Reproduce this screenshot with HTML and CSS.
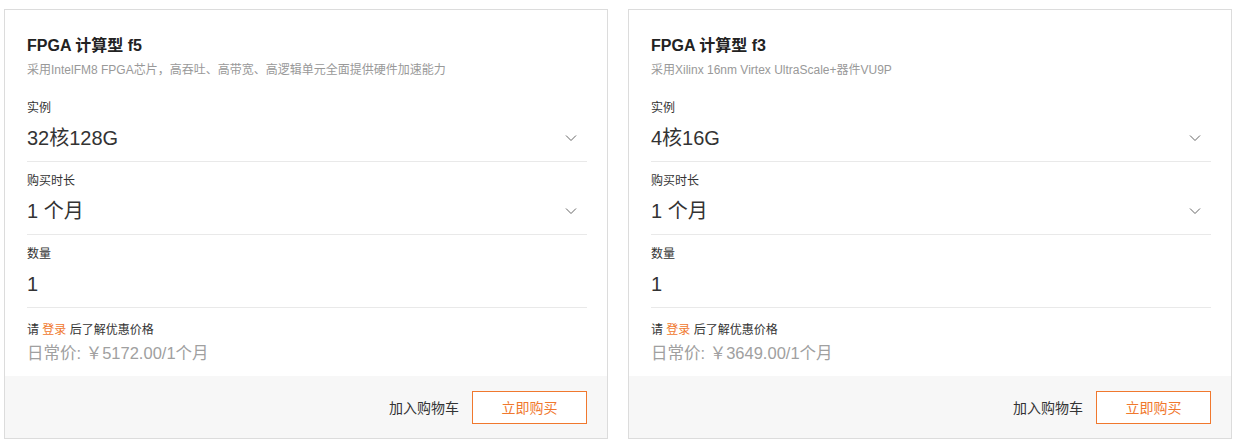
FILE: index.html
```html
<!DOCTYPE html>
<html lang="zh-CN">
<head>
<meta charset="utf-8">
<title>FPGA</title>
<link rel="stylesheet" href="styles.css">
</head>
<body>
<div class="page">
  <div class="card">
    <div class="body">
      <div class="head">
        <div class="title">FPGA 计算型 f5</div>
        <div class="desc">采用IntelFM8 FPGA芯片，高吞吐、高带宽、高逻辑单元全面提供硬件加速能力</div>
      </div>
      <div class="field">
        <div class="label">实例</div>
        <div class="value"><span>32核128G</span><svg class="chev" width="12" height="8" viewBox="0 0 12 8"><path d="M1 1.5 L6 6.5 L11 1.5" fill="none" stroke="#666" stroke-width="1"/></svg></div>
      </div>
      <div class="field">
        <div class="label">购买时长</div>
        <div class="value"><span>1 个月</span><svg class="chev" width="12" height="8" viewBox="0 0 12 8"><path d="M1 1.5 L6 6.5 L11 1.5" fill="none" stroke="#666" stroke-width="1"/></svg></div>
      </div>
      <div class="field">
        <div class="label">数量</div>
        <div class="value"><span>1</span></div>
      </div>
      <div class="login">请 <a class="link">登录</a> 后了解优惠价格</div>
      <div class="price">日常价: ￥5172.00/1个月</div>
    </div>
    <div class="foot">
      <span class="cart">加入购物车</span>
      <span class="buy">立即购买</span>
    </div>
  </div>
  <div class="card">
    <div class="body">
      <div class="head">
        <div class="title">FPGA 计算型 f3</div>
        <div class="desc">采用Xilinx 16nm Virtex UltraScale+器件VU9P</div>
      </div>
      <div class="field">
        <div class="label">实例</div>
        <div class="value"><span>4核16G</span><svg class="chev" width="12" height="8" viewBox="0 0 12 8"><path d="M1 1.5 L6 6.5 L11 1.5" fill="none" stroke="#666" stroke-width="1"/></svg></div>
      </div>
      <div class="field">
        <div class="label">购买时长</div>
        <div class="value"><span>1 个月</span><svg class="chev" width="12" height="8" viewBox="0 0 12 8"><path d="M1 1.5 L6 6.5 L11 1.5" fill="none" stroke="#666" stroke-width="1"/></svg></div>
      </div>
      <div class="field">
        <div class="label">数量</div>
        <div class="value"><span>1</span></div>
      </div>
      <div class="login">请 <a class="link">登录</a> 后了解优惠价格</div>
      <div class="price">日常价: ￥3649.00/1个月</div>
    </div>
    <div class="foot">
      <span class="cart">加入购物车</span>
      <span class="buy">立即购买</span>
    </div>
  </div>
</div>
</body>
</html>
```
FILE: styles.css
```css
html, body {
  margin: 0;
  padding: 0;
  background: #fff;
}
body {
  font-family: "Liberation Sans", Arial, "Noto Sans CJK SC", sans-serif;
  color: #333;
}
.page {
  display: flex;
  gap: 20px;
  padding: 9px 0 0 4px;
}
.card {
  width: 604px;
  height: 430px;
  box-sizing: border-box;
  border: 1px solid #dcdcdc;
  display: flex;
  flex-direction: column;
}
.body {
  flex: 1;
  padding: 24px 20px 0 22px;
}
.head {
  padding-bottom: 10px;
}
.title {
  font-size: 16px;
  font-weight: bold;
  line-height: 24px;
  color: #222;
}
.desc {
  margin-top: 3px;
  font-size: 12px;
  line-height: 18px;
  color: #999;
}
.field {
  padding: 10px 0 8px;
  border-bottom: 1px solid #e9e9e9;
}
.label {
  font-size: 12px;
  line-height: 18px;
  color: #333;
}
.value {
  margin-top: 6px;
  height: 30px;
  display: flex;
  align-items: center;
  justify-content: space-between;
  font-size: 20px;
  line-height: 30px;
  color: #333;
}
.chev {
  margin-right: 10px;
}
.login {
  margin-top: 13px;
  font-size: 12px;
  line-height: 18px;
  color: #333;
}
.link {
  color: #f0782e;
  text-decoration: none;
}
.price {
  margin-top: 3px;
  font-size: 16.5px;
  line-height: 22px;
  color: #a0a0a0;
}
.foot {
  height: 62px;
  background: #f7f7f7;
  display: flex;
  align-items: center;
  justify-content: flex-end;
  gap: 13px;
  padding-right: 20px;
}
.cart {
  font-size: 14px;
  color: #333;
}
.buy {
  width: 115px;
  height: 33px;
  box-sizing: border-box;
  border: 1px solid #f0782e;
  background: #fff;
  color: #f0782e;
  font-size: 14px;
  display: flex;
  align-items: center;
  justify-content: center;
}
```
